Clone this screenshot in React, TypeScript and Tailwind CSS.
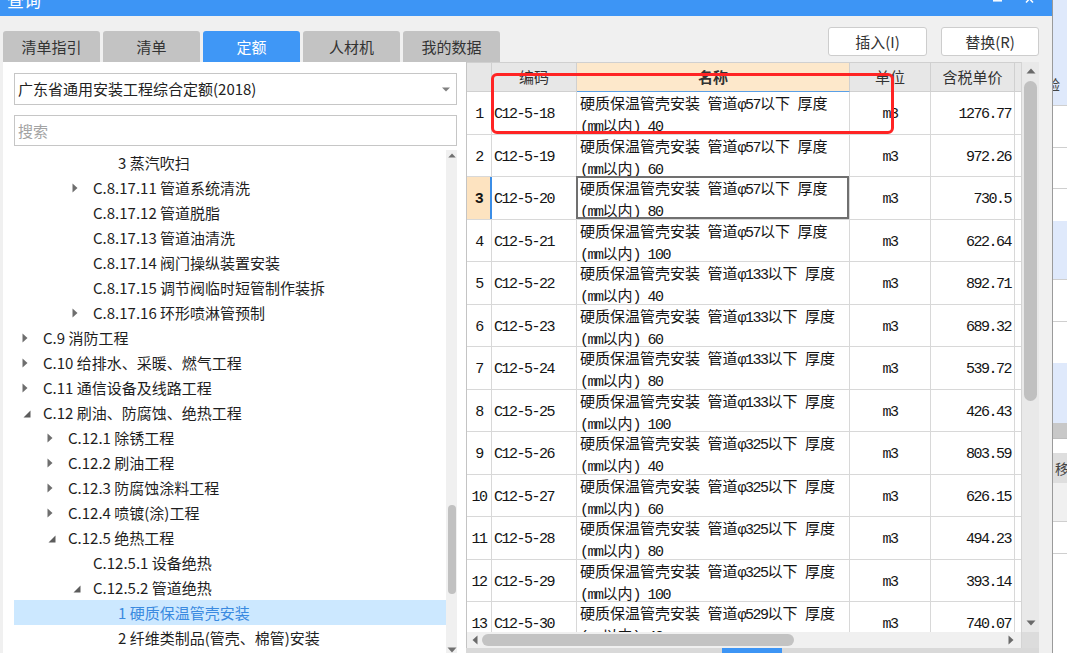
import React from 'react';

type TreeItem = { l: number; t: string; a?: 'r' | 'd'; sel?: boolean };

const tree: TreeItem[] = [
  { l: 3, t: '3 蒸汽吹扫' },
  { l: 2, t: 'C.8.17.11 管道系统清洗', a: 'r' },
  { l: 2, t: 'C.8.17.12 管道脱脂' },
  { l: 2, t: 'C.8.17.13 管道油清洗' },
  { l: 2, t: 'C.8.17.14 阀门操纵装置安装' },
  { l: 2, t: 'C.8.17.15 调节阀临时短管制作装拆' },
  { l: 2, t: 'C.8.17.16 环形喷淋管预制', a: 'r' },
  { l: 0, t: 'C.9 消防工程', a: 'r' },
  { l: 0, t: 'C.10 给排水、采暖、燃气工程', a: 'r' },
  { l: 0, t: 'C.11 通信设备及线路工程', a: 'r' },
  { l: 0, t: 'C.12 刷油、防腐蚀、绝热工程', a: 'd' },
  { l: 1, t: 'C.12.1 除锈工程', a: 'r' },
  { l: 1, t: 'C.12.2 刷油工程', a: 'r' },
  { l: 1, t: 'C.12.3 防腐蚀涂料工程', a: 'r' },
  { l: 1, t: 'C.12.4 喷镀(涂)工程', a: 'r' },
  { l: 1, t: 'C.12.5 绝热工程', a: 'd' },
  { l: 2, t: 'C.12.5.1 设备绝热' },
  { l: 2, t: 'C.12.5.2 管道绝热', a: 'd' },
  { l: 3, t: '1 硬质保温管壳安装', sel: true },
  { l: 3, t: '2 纤维类制品(管壳、棉管)安装' },
];

const rows: [string, string, string, string][] = [
  ['C12-5-18', '57', '40', '1276.77'],
  ['C12-5-19', '57', '60', '972.26'],
  ['C12-5-20', '57', '80', '730.5'],
  ['C12-5-21', '57', '100', '622.64'],
  ['C12-5-22', '133', '40', '892.71'],
  ['C12-5-23', '133', '60', '689.32'],
  ['C12-5-24', '133', '80', '539.72'],
  ['C12-5-25', '133', '100', '426.43'],
  ['C12-5-26', '325', '40', '803.59'],
  ['C12-5-27', '325', '60', '626.15'],
  ['C12-5-28', '325', '80', '494.23'],
  ['C12-5-29', '325', '100', '393.14'],
  ['C12-5-30', '529', '40', '740.07'],
];

const spacer = ['w-[8px]', 'w-[33px]', 'w-[58px]', 'w-[83px]'];

function Mixed({ s }: { s: string }) {
  const parts = s.split(/([\x20-\x7E\u03C6]+)/).filter((p) => p.length > 0);
  return (
    <>
      {parts.map((p, i) =>
        /^[\x20-\x7E\u03C6]/.test(p) ? (
          <span key={i} className="font-['Liberation_Mono',monospace] tracking-[-1.5px] whitespace-pre">
            {p}
          </span>
        ) : (
          <span key={i}>{p}</span>
        )
      )}
    </>
  );
}

function ArrowRight() {
  return (
    <svg width="6" height="10" viewBox="0 0 6 10">
      <path d="M0.5 0.5 L5.5 5 L0.5 9.5 Z" fill="#6e6e6e" />
    </svg>
  );
}

function ArrowDown() {
  return (
    <svg width="8" height="8" viewBox="0 0 8 8" className="ml-[1px] mt-[2px]">
      <path d="M7.5 0.5 L7.5 7.5 L0.5 7.5 Z" fill="#5c5c5c" />
    </svg>
  );
}

function Tri({ dir, color = '#6a6a6a' }: { dir: 'up' | 'down' | 'left' | 'right'; color?: string }) {
  if (dir === 'up')
    return (
      <svg width="10" height="6" viewBox="0 0 10 6">
        <path d="M0.5 5.5 L5 0.5 L9.5 5.5 Z" fill={color} />
      </svg>
    );
  if (dir === 'down')
    return (
      <svg width="10" height="6" viewBox="0 0 10 6">
        <path d="M0.5 0.5 L5 5.5 L9.5 0.5 Z" fill={color} />
      </svg>
    );
  if (dir === 'left')
    return (
      <svg width="6" height="10" viewBox="0 0 6 10">
        <path d="M5.5 0.5 L0.5 5 L5.5 9.5 Z" fill={color} />
      </svg>
    );
  return (
    <svg width="6" height="10" viewBox="0 0 6 10">
      <path d="M0.5 0.5 L5.5 5 L0.5 9.5 Z" fill={color} />
    </svg>
  );
}

export default function App() {
  const tabs = ['清单指引', '清单', '定额', '人材机', '我的数据'];
  return (
    <div className="w-[1067px] h-[653px] overflow-hidden flex bg-white relative font-['Noto_Sans_CJK_SC','Noto_Sans',sans-serif]">
      {/* Dialog */}
      <div className="w-[1053px] h-full flex flex-col border-r border-[#9a9a9a]">
        {/* Title bar */}
        <div className="h-[16px] bg-[#3d95f5] overflow-hidden flex items-start">
          <div className="pl-[7px] -mt-[9px] text-[17px] leading-[17px] text-white whitespace-nowrap">查询</div>
          <svg width="50" height="16" viewBox="0 0 50 16" className="ml-auto mr-[12px]">
            <line x1="3" y1="0.8" x2="12" y2="0.8" stroke="#ffffff" strokeWidth="1.5" />
            <line x1="36" y1="-5" x2="43" y2="2.5" stroke="#ffffff" strokeWidth="1.5" />
            <line x1="43" y1="-5" x2="36" y2="2.5" stroke="#ffffff" strokeWidth="1.5" />
          </svg>
        </div>
        {/* Body */}
        <div className="flex-1 min-h-0 bg-[#f0f0f0] flex flex-col pl-[3px] pr-[13px]">
          {/* Top row */}
          <div className="h-[46px] flex justify-between">
            <div className="self-end flex gap-[3px]">
              {tabs.map((t) => (
                <div
                  key={t}
                  className={`w-[97px] h-[31px] rounded-t-[3px] flex items-center justify-center text-[15px] leading-[20px] ${
                    t === '定额' ? 'bg-[#3f97f6] text-white' : 'bg-[#c3c3c3] text-[#333333]'
                  }`}
                >
                  {t}
                </div>
              ))}
            </div>
            <div className="flex gap-[14px] mt-[11px]">
              <div className="w-[99px] h-[29px] bg-white border border-[#cdcdcd] rounded-[3px] flex items-center justify-center text-[15px] leading-[20px] text-[#333333]">
                插入(I)
              </div>
              <div className="w-[98px] h-[29px] bg-white border border-[#cdcdcd] rounded-[3px] flex items-center justify-center text-[15px] leading-[20px] text-[#333333]">
                替换(R)
              </div>
            </div>
          </div>
          {/* Main row */}
          <div className="flex-1 min-h-0 flex">
            {/* Left panel */}
            <div className="w-[463px] h-full bg-white flex flex-col pl-[11px] pr-[9px] pt-[11px]">
              <div className="h-[32px] border border-[#c6c6c6] bg-white flex items-center pl-[3px] pr-[6px] text-[15px] leading-[20px] text-[#222222]">
                <span className="whitespace-nowrap">广东省通用安装工程综合定额(2018)</span>
                <svg width="8" height="5" viewBox="0 0 8 5" className="ml-auto">
                  <path d="M0 0.5 L8 0.5 L4 4.5 Z" fill="#808080" />
                </svg>
              </div>
              <div className="mt-[10px] h-[31px] border border-[#c6c6c6] bg-white flex items-center pl-[3px] text-[15px] leading-[20px] text-[#a3a3a3]">
                搜索
              </div>
              <div className="mt-[4px] flex-1 min-h-0 flex overflow-hidden">
                <div className="w-[432px] flex flex-col">
                  {tree.map((it, i) => (
                    <div
                      key={i}
                      className={`flex items-center h-[25px] shrink-0 ${
                        it.sel ? 'bg-[#cce8ff] text-[#3a8ae0]' : 'text-[#1e1e1e]'
                      }`}
                    >
                      <div className={`${spacer[it.l]} shrink-0`} />
                      <div className="w-[21px] h-[25px] shrink-0 flex items-center">
                        {it.a === 'r' ? <ArrowRight /> : it.a === 'd' ? <ArrowDown /> : null}
                      </div>
                      <span className="text-[15px] leading-[25px] whitespace-nowrap">{it.t}</span>
                    </div>
                  ))}
                </div>
                <div className="w-[11px] bg-[#f0f0f0] flex flex-col items-center pt-[3px]">
                  <Tri dir="up" color="#707070" />
                  <div className="mt-[347px] h-[89px] w-[8px] rounded-full bg-[#c1c1c1] shrink-0" />
                  <div className="mt-[53px] shrink-0">
                    <Tri dir="down" color="#707070" />
                  </div>
                </div>
              </div>
            </div>
            {/* Table area */}
            <div className="w-[573px] h-full flex flex-col">
              <div className="h-[586px] flex">
                <div className="w-[555px] flex flex-col border-l border-[#c4c4c4] bg-white">
                  {/* Header */}
                  <div className="h-[30px] border-t border-[#d0d0d0] flex bg-[#e7e7e7] text-[15px] leading-[20px] text-[#333333] shrink-0">
                    <div className="w-[25px] border-r border-b border-[#d0d0d0]" />
                    <div className="w-[85px] border-r border-b border-[#d0d0d0] flex items-center justify-center">编码</div>
                    <div className="w-[273px] border-r border-[#d0d0d0] border-b border-b-[#5a9fe6] bg-[#fde8cb] flex items-center justify-center font-bold">
                      名称
                    </div>
                    <div className="w-[81px] border-r border-b border-[#d0d0d0] flex items-center justify-center">单位</div>
                    <div className="w-[84px] border-r border-b border-[#d0d0d0] flex items-center justify-center">含税单价</div>
                    <div className="w-[6px] border-b border-[#d0d0d0]" />
                  </div>
                  {/* Rows */}
                  <div className="flex-1 min-h-0 overflow-hidden flex flex-col text-[#141414]">
                    {rows.map((r, i) => {
                      const n = i + 1;
                      const sel = n === 3;
                      return (
                        <div
                          key={i}
                          className={`flex shrink-0 border-b border-[#d8d8d8] ${i % 2 === 0 ? 'h-[43px]' : 'h-[42px]'}`}
                        >
                          <div
                            className={`w-[25px] flex items-center justify-center pt-[5px] text-[15px] font-['Liberation_Mono',monospace] tracking-[-1.5px] ${
                              sel
                                ? 'bg-[#fde3c0] font-bold border-r-2 border-r-[#3b8de6]'
                                : 'border-r border-[#d8d8d8]'
                            }`}
                          >
                            {n}
                          </div>
                          <div className="w-[85px] border-r border-[#d8d8d8] flex items-center pl-[2px] pt-[5px] text-[15px] font-['Liberation_Mono',monospace] tracking-[-1.5px] whitespace-nowrap">
                            {r[0]}
                          </div>
                          <div className="w-[273px] border-r border-[#d8d8d8] relative flex flex-col justify-center pl-[3px] pt-[4px] text-[15px] leading-[19px] whitespace-nowrap">
                            <div>
                              <Mixed s={`硬质保温管壳安装 管道\u03C6${r[1]}以下 厚度`} />
                            </div>
                            <div>
                              <Mixed s={`(mm以内) ${r[2]}`} />
                            </div>
                            {sel && (
                              <div className="absolute -left-px -top-px right-0 bottom-0 border-2 border-[#707070]" />
                            )}
                          </div>
                          <div className="w-[81px] border-r border-[#d8d8d8] flex items-center justify-center pt-[5px] text-[15px] font-['Liberation_Mono',monospace] tracking-[-1.5px]">
                            m3
                          </div>
                          <div className="w-[84px] border-r border-[#d8d8d8] flex items-center justify-end pr-[3px] pt-[5px] text-[15px] font-['Liberation_Mono',monospace] tracking-[-1.5px]">
                            {r[3]}
                          </div>
                          <div className="w-[6px]" />
                        </div>
                      );
                    })}
                  </div>
                  {/* Horizontal scrollbar */}
                  <div className="h-[16px] bg-[#f0f0f0] flex items-center pl-[5px] pr-[7px] shrink-0">
                    <Tri dir="left" color="#6a6a6a" />
                    <div className="ml-[4px] w-[312px] h-[12px] rounded-full bg-[#c3c3c3]" />
                    <div className="ml-auto">
                      <Tri dir="right" color="#6a6a6a" />
                    </div>
                  </div>
                </div>
                {/* Vertical scrollbar */}
                <div className="w-[18px] flex flex-col border-l border-[#d4d4d4]">
                  <div className="flex-1 bg-[#e9e9e9] flex flex-col items-center pt-[6px]">
                    <Tri dir="up" color="#6a6a6a" />
                    <div className="mt-[7px] h-[320px] w-[13px] rounded-full bg-[#c0c0c0] shrink-0" />
                    <div className="mt-auto mb-[6px]">
                      <Tri dir="down" color="#6a6a6a" />
                    </div>
                  </div>
                  <div className="h-[16px] bg-[#dcdcdc] shrink-0" />
                </div>
              </div>
              {/* Bottom strip */}
              <div className="flex-1 bg-[#d9d9d9] flex">
                <div className="ml-[256px] w-[60px] bg-[#3d95f5]" />
              </div>
            </div>
          </div>
        </div>
      </div>
      {/* Background app strip */}
      <div className="w-[14px] h-full flex flex-col overflow-hidden text-[#444444]">
        <div className="h-[105px] bg-[#dfe9fb] shrink-0 pt-[76px] overflow-hidden">
          <div className="-ml-[7px] text-[14px] leading-[16px] whitespace-nowrap">验</div>
        </div>
        <div className="h-[42px] bg-white border-t border-[#cfcfcf] shrink-0" />
        <div className="h-[41px] bg-white border-t border-[#cfcfcf] shrink-0" />
        <div className="h-[33px] bg-white border-t border-[#cfcfcf] shrink-0" />
        <div className="h-[58px] bg-[#dfe9fb] shrink-0" />
        <div className="h-[42px] bg-white border-t border-[#cfcfcf] shrink-0" />
        <div className="h-[42px] bg-white border-t border-[#cfcfcf] shrink-0" />
        <div className="h-[60px] bg-[#dfe9fb] shrink-0" />
        <div className="h-[15px] bg-[#c8c8c8] shrink-0" />
        <div className="h-[15px] bg-white border-t border-[#bdbdbd] shrink-0" />
        <div className="h-[30px] bg-[#dedede] shrink-0 flex items-center overflow-hidden">
          <div className="pl-[2px] text-[14px] leading-[16px] whitespace-nowrap">移工</div>
        </div>
        <div className="h-[38px] bg-[#f0f0f0] shrink-0" />
        <div className="h-[32px] bg-white border-t border-[#cfcfcf] shrink-0" />
        <div className="flex-1 bg-white border-t border-[#cfcfcf]" />
      </div>
      {/* Red annotation */}
      <div className="absolute left-[491px] top-[73px] w-[403px] h-[61px] border-[3px] border-[#ff2424] rounded-[6px] pointer-events-none" />
    </div>
  );
}
